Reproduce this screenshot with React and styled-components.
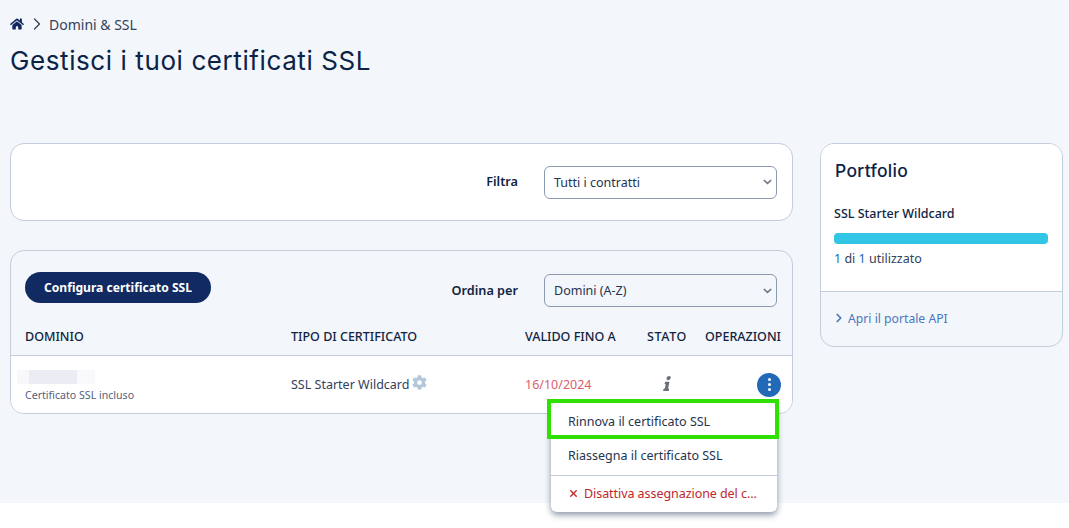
import styled, { createGlobalStyle } from "styled-components"
import { FaHome, FaCog, FaInfo } from "react-icons/fa"
import { FiChevronRight, FiX } from "react-icons/fi"

const GlobalStyle = createGlobalStyle`
  html, body {
    margin: 0;
    background: #fff;
    font-family: "Noto Sans", "Open Sans", sans-serif;
    color: #0e2a5a;
  }
  * { box-sizing: border-box; }
`

const Shell = styled.div`
  height: 528px;
  background: #fff;
`

const Page = styled.div`
  height: 503px;
  background: #f3f6fa;
  padding: 14px 6px 0 10px;
`

const Breadcrumb = styled.div`
  display: flex;
  align-items: center;
  height: 20px;
  font-size: 14px;
  color: #33415c;
  svg.home { color: #11295f; font-size: 14px; }
  svg.sep { font-size: 20px; margin: 0 2px 0 3px; color: #33415c; stroke-width: 1.5; }
`

const Title = styled.h1`
  margin: 9px 0 0;
  height: 52px;
  font-family: Inter, "Noto Sans", sans-serif;
  font-size: 26px;
  line-height: 36px;
  font-weight: 400;
  letter-spacing: 0.59px;
  color: #0b2347;
`

const Columns = styled.div`
  display: grid;
  grid-template-columns: 783px 243px;
  column-gap: 27px;
  margin-top: 48px;
  align-items: start;
`

const Main = styled.div`
  display: flex;
  flex-direction: column;
  gap: 29px;
`

const Card = styled.div`
  background: ${p => (p.$tint ? "#f3f6fa" : "#fff")};
  border: 1px solid #c3cddb;
  border-radius: 14px;
`

const FilterBar = styled(Card)`
  height: 78px;
  display: flex;
  justify-content: flex-end;
  align-items: center;
  padding: 0 15px 0 0;
`

const Label = styled.span`
  font-size: 12.7px;
  font-weight: 600;
  color: #10243f;
  margin-right: 26px;
  margin-top: -2px;
`

const Select = styled.div`
  width: 233px;
  height: 33px;
  padding: 0 4px 0 9px;
  display: flex;
  align-items: center;
  justify-content: space-between;
  background: ${p => (p.$tint ? "#f3f6fa" : "#fff")};
  border: 1px solid #8c9ab0;
  border-radius: 6px;
  font-size: 12.5px;
  color: #24344f;
`

const Chevron = () => (
  <svg width="9" height="6" viewBox="0 0 9 6" fill="none" stroke="#6b7685" strokeWidth="1.6">
    <path d="M0.8 1l3.7 3.4L8.2 1" />
  </svg>
)

const TableCard = styled(Card)`
  position: relative;
  height: 164px;
  display: flex;
  flex-direction: column;
`

const Toolbar = styled.div`
  height: 49px;
  margin-top: 21px;
  padding: 0 15px 0 14px;
  display: flex;
  justify-content: space-between;
  align-items: flex-start;
`

const PrimaryButton = styled.button`
  height: 31px;
  width: 186px;
  margin: 0;
  padding: 0;
  border: 0;
  border-radius: 16px;
  background: #112a61;
  color: #fff;
  font-family: inherit;
  font-size: 12.1px;
  font-weight: 700;
`

const SortGroup = styled.div`
  display: flex;
  align-items: center;
  margin-top: 2px;
`

const Row = styled.div`
  display: grid;
  grid-template-columns: 266px 234px 122px 58px 1fr;
  align-items: center;
  padding-left: 14px;
`

const HeadRow = styled(Row)`
  height: 35px;
  border-bottom: 1px solid #c3cddb;
  font-size: 12.5px;
  font-weight: 500;
  color: #10243f;
  padding-bottom: 3px;
`

const HeadCell = styled.div`
  white-space: nowrap;
  letter-spacing: ${p => (p.$wide ? "0.6px" : "0")};
`

const BodyRow = styled(Row)`
  flex: 1;
  background: #fff;
  border-radius: 0 0 13px 13px;
  font-size: 12.5px;
  color: #33415c;
`

const DomainCell = styled.div`
  display: flex;
  flex-direction: column;
  gap: 4px;
  padding-top: 3px;
`

const BlurredName = styled.div`
  width: 78px;
  height: 14px;
  margin-left: -8px;
  background: linear-gradient(90deg, #f8f8fb 0 15%, #ecedf4 15% 77%, #f9f9fb 77%);
`

const SubText = styled.div`
  font-size: 10.6px;
  color: #55617a;
`

const TypeCell = styled.div`
  display: flex;
  align-items: center;
  gap: 3px;
  svg { color: #b4c6da; font-size: 15px; margin: -4px 0 0 0; }
`

const Expiry = styled.div`
  color: #d9606c;
`

const StatusIcon = styled.div`
  display: flex;
  padding-left: 13px;
  margin-top: -3px;
  color: #6b7079;
  font-size: 15px;
  svg { transform: skewX(-12deg); }
`

const KebabButton = styled.div`
  width: 24px;
  height: 24px;
  border-radius: 50%;
  background: #2269b8;
  margin-left: 52px;
  display: flex;
  flex-direction: column;
  align-items: center;
  justify-content: center;
  gap: 2px;
  i {
    width: 3px;
    height: 3px;
    border-radius: 50%;
    background: #fff;
  }
`

const Menu = styled.div`
  position: absolute;
  left: 540px;
  top: 152px;
  width: 226px;
  height: 109px;
  background: #fff;
  border-radius: 6px;
  box-shadow: 0 3px 6px rgba(50, 70, 100, 0.55);
  font-size: 12.5px;
  color: #24344f;
  z-index: 2;
`

const MenuItem = styled.div`
  height: ${p => p.$h}px;
  padding: 0 0 ${p => p.$lift || 0}px 17px;
  display: flex;
  align-items: center;
  white-space: nowrap;
  color: ${p => (p.$danger ? "#c0272d" : "#24344f")};
  letter-spacing: ${p => (p.$danger ? "-0.06px" : "0")};
  border-top: ${p => (p.$divider ? "1px solid #c3cddb" : "0")};
  svg { margin-right: 5px; font-size: 11px; stroke-width: 3; }
`

const Highlight = styled.div`
  position: absolute;
  left: -4px;
  top: -4px;
  width: 232px;
  height: 40px;
  border: 4px solid #2fe000;
`

const Side = styled(Card)`
  height: 204px;
  overflow: hidden;
  display: flex;
  flex-direction: column;
`

const SideTop = styled.div`
  height: 148px;
  background: #fff;
  border-bottom: 1px solid #c3cddb;
  padding: 15px 14px 0 13px;
`

const SideTitle = styled.h2`
  margin: 0 0 0 1px;
  font-family: Inter, "Noto Sans", sans-serif;
  font-size: 17.5px;
  line-height: 24px;
  font-weight: 500;
  letter-spacing: 0.3px;
  color: #0b2347;
`

const PlanName = styled.div`
  margin-top: 22px;
  font-size: 12.5px;
  font-weight: 500;
  color: #10243f;
`

const Bar = styled.div`
  margin-top: 11px;
  height: 11px;
  border-radius: 4px;
  background: #32c5e6;
`

const Usage = styled.div`
  margin-top: 6px;
  font-size: 12.5px;
  color: #33415c;
  b { font-weight: 400; color: #2269b8; }
`

const SideLink = styled.div`
  flex: 1;
  display: flex;
  align-items: center;
  gap: 2px;
  padding: 0 0 2px 11px;
  font-size: 12.2px;
  color: #4a78c0;
  svg { font-size: 14px; stroke-width: 3; }
`

export default function App() {
  return (
    <Shell>
      <GlobalStyle />
      <Page>
        <Breadcrumb>
          <FaHome className="home" />
          <FiChevronRight className="sep" />
          Domini &amp; SSL
        </Breadcrumb>
        <Title>Gestisci i tuoi certificati SSL</Title>
        <Columns>
          <Main>
            <FilterBar>
              <Label>Filtra</Label>
              <Select>Tutti i contratti<Chevron /></Select>
            </FilterBar>
            <TableCard $tint>
              <Toolbar>
                <PrimaryButton>Configura certificato SSL</PrimaryButton>
                <SortGroup>
                  <Label>Ordina per</Label>
                  <Select $tint>Domini (A-Z)<Chevron /></Select>
                </SortGroup>
              </Toolbar>
              <HeadRow>
                <HeadCell>DOMINIO</HeadCell>
                <HeadCell>TIPO DI CERTIFICATO</HeadCell>
                <HeadCell>VALIDO FINO A</HeadCell>
                <HeadCell $wide>STATO</HeadCell>
                <HeadCell>OPERAZIONI</HeadCell>
              </HeadRow>
              <BodyRow>
                <DomainCell>
                  <BlurredName />
                  <SubText>Certificato SSL incluso</SubText>
                </DomainCell>
                <TypeCell>SSL Starter Wildcard <FaCog /></TypeCell>
                <Expiry>16/10/2024</Expiry>
                <StatusIcon><FaInfo /></StatusIcon>
                <KebabButton><i /><i /><i /></KebabButton>
              </BodyRow>
              <Menu>
                <Highlight />
                <MenuItem $h={36}>Rinnova il certificato SSL</MenuItem>
                <MenuItem $h={36} $lift={4}>Riassegna il certificato SSL</MenuItem>
                <MenuItem $h={37} $lift={2} $divider $danger><FiX />Disattiva assegnazione del c...</MenuItem>
              </Menu>
            </TableCard>
          </Main>
          <Side $tint>
            <SideTop>
              <SideTitle>Portfolio</SideTitle>
              <PlanName>SSL Starter Wildcard</PlanName>
              <Bar />
              <Usage><b>1</b> di <b>1</b> utilizzato</Usage>
            </SideTop>
            <SideLink><FiChevronRight />Apri il portale API</SideLink>
          </Side>
        </Columns>
      </Page>
    </Shell>
  )
}
